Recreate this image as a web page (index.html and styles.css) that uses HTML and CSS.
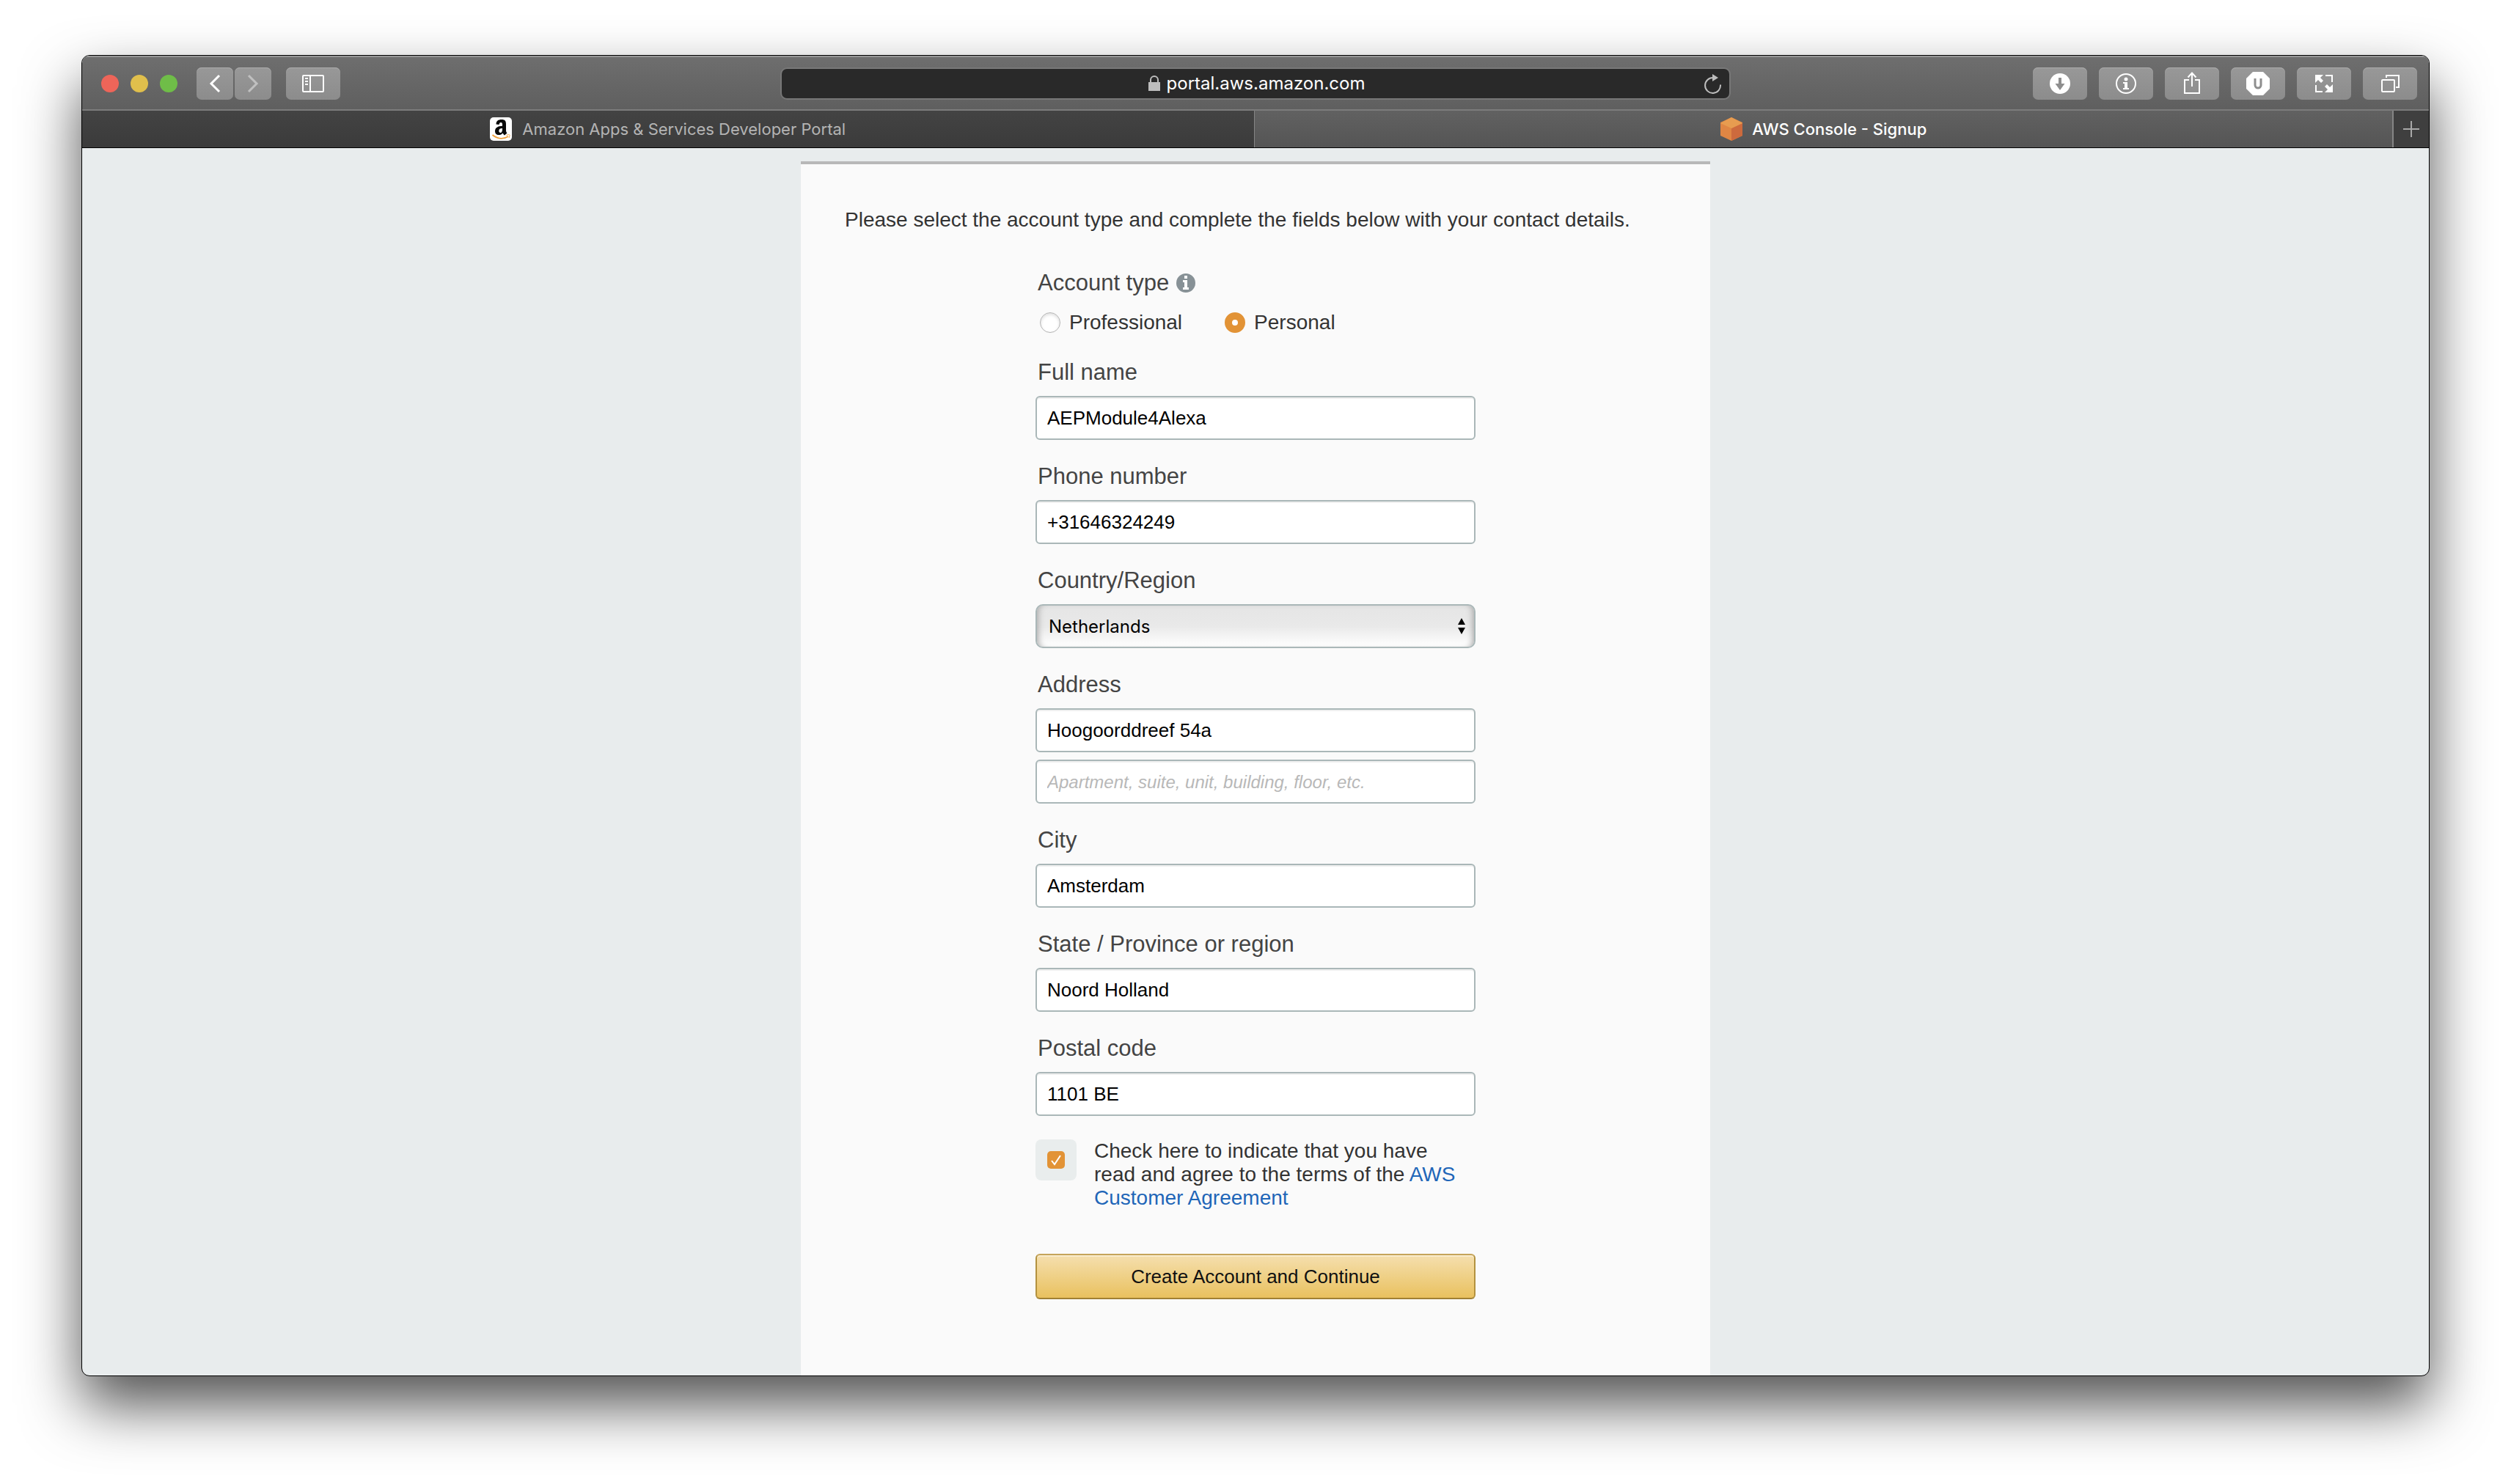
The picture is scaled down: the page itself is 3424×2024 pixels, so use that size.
FILE: index.html
```html
<!DOCTYPE html>
<html lang="en">
<head>
<meta charset="utf-8">
<title>AWS Console - Signup</title>
<link rel="stylesheet" href="styles.css">
</head>
<body>
<div class="window">
  <header class="toolbar">
    <div class="lights"><span class="light red"></span><span class="light yellow"></span><span class="light green"></span></div>
    <div class="nav">
      <button class="tool narrow" aria-label="Back"><svg width="50" height="44" viewBox="0 0 50 44"><path d="M31 11L20 22L31 33" fill="none" stroke="#fff" stroke-width="3"/></svg></button>
      <button class="tool narrow" aria-label="Forward"><svg width="50" height="44" viewBox="0 0 50 44"><path d="M19 11L30 22L19 33" fill="none" stroke="#c0c0c0" stroke-width="3"/></svg></button>
    </div>
    <button class="tool" aria-label="Sidebar"><svg width="74" height="44" viewBox="0 0 74 44" fill="none" stroke="#fff" stroke-width="2"><rect x="23" y="11" width="28" height="22" rx="1"/><path d="M33 11V33M26 15H30M26 19H30M26 23H30"/></svg></button>
    <div class="address">
      <div class="url"><svg width="18" height="24" viewBox="0 0 18 24"><rect x="1" y="10" width="16" height="12" fill="#bdbdbd"/><path d="M4 11V7a5 5 0 0 1 10 0V11" fill="none" stroke="#bdbdbd" stroke-width="2"/></svg><span>portal.aws.amazon.com</span></div>
      <button class="reload" aria-label="Reload"><svg width="24" height="28" viewBox="0 0 24 28"><path d="M22 15.500A10.500 10.500 0 1 1 12 6" fill="none" stroke="#bdbdbd" stroke-width="2"/><path d="M11 1L19 6L11 11Z" fill="#bdbdbd"/></svg></button>
    </div>
    <div class="tools">
      <button class="tool" aria-label="Downloads"><svg width="74" height="44" viewBox="0 0 74 44"><circle cx="37" cy="22" r="14" fill="#fff"/><path d="M35 14H39V22H43.500L37 31L30.500 22H35Z" fill="#8e8e8e"/></svg></button>
      <button class="tool" aria-label="Info"><svg width="74" height="44" viewBox="0 0 74 44"><circle cx="37" cy="22" r="13" fill="none" stroke="#fff" stroke-width="2"/><circle cx="37" cy="16" r="2.500" fill="#fff"/><path d="M33 20H39V28H41V30H33V28H35V22H33Z" fill="#fff"/></svg></button>
      <button class="tool" aria-label="Share"><svg width="74" height="44" viewBox="0 0 74 44" fill="none" stroke="#fff" stroke-width="2"><path d="M33 17H27V35H47V17H41M37 26V8M31.500 13.500L37 7.500L42.500 13.500"/></svg></button>
      <button class="tool" aria-label="Blocker"><svg width="74" height="44" viewBox="0 0 74 44"><path d="M30 6H44L53 15V29L44 38H30L21 29V15Z" fill="#fff"/><path d="M33 15V24a4 4 0 0 0 8 0V15" fill="none" stroke="#8e8e8e" stroke-width="3"/></svg></button>
      <button class="tool" aria-label="Full screen"><svg width="74" height="44" viewBox="0 0 74 44"><path d="M39 11H48V20M26 24V33H35" fill="none" stroke="#fff" stroke-width="2"/><path d="M25 10H36L32 14L36 18L33 21L29 17L25 21ZM49 34H38L42 30L38 26L41 23L45 27L49 23Z" fill="#fff"/></svg></button>
      <button class="tool" aria-label="Tab overview"><svg width="74" height="44" viewBox="0 0 74 44" fill="none" stroke="#fff" stroke-width="2"><rect x="26" y="17" width="17" height="16" rx="1"/><path d="M32 14V11H49V27H45"/></svg></button>
    </div>
  </header>
  <nav class="tabs">
    <a class="tab" href="#apps"><svg width="32" height="32" viewBox="0 0 32 32"><rect width="30" height="32" rx="5" fill="#fff"/><path d="M8.500 9.500C8.500 5 11.500 3 16 3S22 5 22 9V17.500C22 19.500 22.500 20.500 23.500 21.500L20 24.500C19 23.800 18 22.500 17.500 21.500C16 23.500 14.500 24 12 24C9 24 7 22 7 19C7 14 11 12 17 11.700V10C17 8 16.500 7 15 7S13 8 12.500 10ZM17 15C14 15 12.300 16 12.300 18.500C12.300 20 13 21 14.500 21C16.500 21 17 18.500 17 15Z" fill="#0a0a0a" fill-rule="evenodd"/><path d="M3.500 24C11 30 19 30 25 26" fill="none" stroke="#f0a03c" stroke-width="2"/><path d="M22.500 24.500C26 23 27.500 23.500 27 25.500L26 28" fill="none" stroke="#f0a03c" stroke-width="1"/></svg><span>Amazon Apps &amp; Services Developer Portal</span></a>
    <a class="tab active" href="#signup"><svg width="32" height="32" viewBox="0 0 32 32"><path d="M16 0L31 7V25L16 32L1 25V7Z" fill="#df8644"/><path d="M16 15L31 8V25L16 32Z" fill="#cd6a3d"/><path d="M16 0L31 8L16 15L1 8Z" fill="#e79c50"/></svg><span>AWS Console - Signup</span></a>
    <button class="new-tab" aria-label="New tab"><svg width="24" height="24" viewBox="0 0 24 24"><path d="M12 1V23M1 12H23" stroke="#a8a8a8" stroke-width="2"/></svg></button>
  </nav>
  <main class="page">
    <form class="panel">
      <p class="intro">Please select the account type and complete the fields below with your contact details.</p>
      <div class="form">
        <fieldset class="types">
          <legend class="label">Account type <svg width="26" height="26" viewBox="0 0 26 26"><circle cx="13" cy="13" r="13" fill="#879196"/><path d="M11 3H15V7H11ZM9 9H15V19H17V22H9V19H11V12H9Z" fill="#fff"/></svg></legend>
          <div class="radios">
            <label class="choice"><input class="radio" type="radio" name="type">Professional</label>
            <label class="choice"><input class="radio" type="radio" name="type" checked>Personal</label>
          </div>
        </fieldset>
        <div class="field"><label class="label" for="name">Full name</label><input class="box" id="name" type="text" value="AEPModule4Alexa"></div>
        <div class="field"><label class="label" for="phone">Phone number</label><input class="box" id="phone" type="tel" value="+31646324249"></div>
        <div class="field"><label class="label" for="country">Country/Region</label>
          <div class="picker"><select class="box select" id="country"><option>Netherlands</option></select><svg class="arrows" width="12" height="24" viewBox="0 0 12 24"><path d="M6 1L11 10H1ZM6 23L11 14H1Z"/></svg></div></div>
        <div class="field"><label class="label" for="address">Address</label><div class="pair"><input class="box" id="address" type="text" value="Hoogoorddreef 54a"><input class="box" type="text" aria-label="Address line 2" placeholder="Apartment, suite, unit, building, floor, etc."></div></div>
        <div class="field"><label class="label" for="city">City</label><input class="box" id="city" type="text" value="Amsterdam"></div>
        <div class="field"><label class="label" for="state">State / Province or region</label><input class="box" id="state" type="text" value="Noord Holland"></div>
        <div class="field"><label class="label" for="postal">Postal code</label><input class="box" id="postal" type="text" value="1101 BE"></div>
        <div class="terms">
          <span class="tick"><input class="check" id="agree" type="checkbox" checked><svg class="mark" width="24" height="24" viewBox="0 0 24 24"><path d="M6 13L10 18L18 6" fill="none" stroke="#fff" stroke-width="2"/></svg></span>
          <label for="agree">Check here to indicate that you have read and agree to the terms of the <a href="#agreement">AWS Customer Agreement</a></label>
        </div>
        <button class="submit" type="submit">Create Account and Continue</button>
      </div>
    </form>
  </main>
</div>
</body>
</html>
```
FILE: styles.css
```css
* { box-sizing: border-box; }
body {
  margin: 0;
  padding: 75px 111px 147px;
  min-height: 100vh;
  display: flex;
  background: #fff;
  color: #333;
  font-family: "Liberation Sans", Arial, sans-serif;
  font-size: 28px;
}
button, input, select { font: inherit; margin: 0; }
svg { display: block; flex: none; }
a { color: #1f66b8; text-decoration: none; }

.window {
  flex: 1;
  display: flex;
  flex-direction: column;
  overflow: hidden;
  border: 1px solid #000;
  border-radius: 11px;
  background: #e8eced;
  box-shadow: 0 40px 80px rgba(0, 0, 0, .68);
}

/* Browser toolbar */
.toolbar {
  display: flex;
  align-items: center;
  height: 75px;
  padding: 0 16px 0 26px;
  background: linear-gradient(#6e6e6e, #5f5f5f);
  border-top: 2px solid #969696;
  border-bottom: 2px solid #7c7c7c;
}
.lights { display: flex; gap: 16px; margin-right: 26px; }
.light { width: 24px; height: 24px; border-radius: 50%; }
.red { background: #ee6559; }
.yellow { background: #e0bf4c; }
.green { background: #6fbd48; }
.nav { display: flex; gap: 2px; margin-right: 20px; }
.tools { display: flex; gap: 16px; }
.tool {
  width: 74px;
  height: 44px;
  padding: 0;
  border: 0;
  border-radius: 7px;
  background: linear-gradient(#989898, #8c8c8c);
  box-shadow: inset 0 1px #acacac;
}
.narrow { width: 50px; }
.address {
  flex: 1;
  display: flex;
  align-items: center;
  height: 44px;
  margin: 0 412px 0 600px;
  padding: 0 10px 0 36px;
  border: 2px solid #777;
  border-radius: 9px;
  background: #292929;
}
.url {
  flex: 1;
  display: flex;
  justify-content: center;
  align-items: center;
  gap: 8px;
  color: #fff;
  font-family: Inter, sans-serif;
  font-size: 24px;
}
.reload { padding: 0; border: 0; background: none; }

/* Tabs */
.tabs {
  display: flex;
  height: 51px;
  border-bottom: 1px solid #000;
  font-family: Inter, sans-serif;
  font-size: 22px;
}
.tab {
  flex: 1598;
  display: flex;
  justify-content: center;
  align-items: center;
  gap: 12px;
  background: linear-gradient(#434343, #3b3b3b);
  color: #b4b4b4;
}
.active {
  flex: 1552;
  border-left: 1px solid #858585;
  background: linear-gradient(#616161, #555);
  color: #fff;
  font-weight: 500;
}
.new-tab {
  display: grid;
  place-items: center;
  width: 50px;
  padding: 0;
  border: 0;
  border-left: 2px solid #858585;
  background: #3f3f3f;
}

/* Signup page */
.page { flex: 1; display: flex; justify-content: center; padding-top: 18px; }
.panel {
  width: 1240px;
  padding: 58px 60px;
  border-top: 4px solid #b8b8b8;
  background: #fafafa;
}
.intro { margin: 0 0 50px; line-height: 36px; }
.form {
  display: flex;
  flex-direction: column;
  gap: 32px;
  width: 600px;
  margin: 0 auto;
}
.types { margin: 0 0 2px; padding: 0; border: 0; }
.label {
  display: flex;
  align-items: center;
  gap: 10px;
  padding: 0 3px;
  color: #444;
  font-size: 31px;
  line-height: 36px;
}
.radios { display: flex; gap: 58px; margin-top: 20px; padding-left: 6px; }
.choice { display: flex; align-items: center; gap: 12px; line-height: 32px; }
.radio {
  appearance: none;
  width: 28px;
  height: 28px;
  border: 1px solid #b4b4b4;
  border-radius: 50%;
  background: #fff;
  box-shadow: inset 0 2px 4px #ddd;
}
.radio:checked { border: 10px solid #e29336; box-shadow: none; }
.field { display: flex; flex-direction: column; gap: 14px; }
.pair { display: grid; gap: 10px; }
.box {
  width: 100%;
  height: 60px;
  padding: 0 14px;
  border: 2px solid #aab7b8;
  border-radius: 6px;
  background: #fff;
  box-shadow: inset 0 2px #efefef;
  color: #000;
  font-size: 26px;
}
.box::placeholder { color: #b8b8b8; font-size: 24px; font-style: italic; opacity: 1; }
.picker { position: relative; }
.select {
  display: block;
  appearance: none;
  padding: 0 16px;
  border-radius: 10px;
  background: linear-gradient(#e5e5e5, #e9e9e9 50%, #fff);
  box-shadow: inset 8px 0 8px -6px #aaa, inset -8px 0 8px -6px #aaa;
  font-family: Inter, sans-serif;
  font-size: 24px;
}
.arrows { position: absolute; right: 13px; top: 18px; pointer-events: none; }
.terms { display: flex; gap: 24px; padding-right: 8px; line-height: 32px; }
.tick {
  position: relative;
  flex: none;
  display: grid;
  place-items: center;
  width: 56px;
  height: 56px;
  border-radius: 8px;
  background: #e9eded;
}
.check {
  appearance: none;
  width: 24px;
  height: 24px;
  border-radius: 5px;
  background: #e29336;
}
.mark { position: absolute; pointer-events: none; }
.submit {
  height: 62px;
  margin-top: 28px;
  border: 2px solid #b3923f;
  border-top-color: #c5a45a;
  border-bottom-color: #a08034;
  border-radius: 6px;
  background: linear-gradient(#f5dfae, #e9c15f);
  box-shadow: inset 0 2px #f9ebcb;
  color: #111;
  font-size: 26px;
}
```
